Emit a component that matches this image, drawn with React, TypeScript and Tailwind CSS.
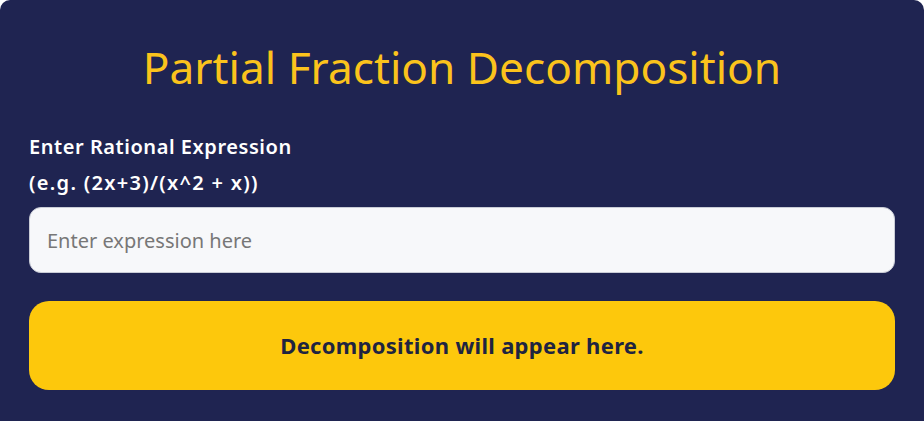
export default function App() {
  return (
    <div className="min-h-screen bg-white" style={{ fontFamily: '"Noto Sans", "Open Sans", sans-serif' }}>
      <div className="rounded-t-[10px] bg-[#1f2451] px-[29px] pt-[40px] pb-[40px]">
        <h1 className="text-center text-[44.2px] leading-[55px] font-normal text-[#fbc31c]">
          Partial Fraction Decomposition
        </h1>
        <div className="mt-[34px] text-[20px] leading-[36px] font-semibold text-white">
          <div className="tracking-[0.55px]">Enter Rational Expression</div>
          <div className="tracking-[1.3px]">(e.g. (2x+3)/(x^2 + x))</div>
        </div>
        <input
          type="text"
          placeholder="Enter expression here"
          className="mt-[6px] block h-[66px] w-full rounded-[12px] border border-[#c9ccd6] bg-[#f7f8fa] px-[17px] text-[20px] text-[#222] placeholder:text-[#777] outline-none"
        />
        <div className="mt-[28px] flex h-[89px] items-center justify-center rounded-[20px] bg-[#fdc80c] text-[22px] tracking-[0.3px] font-bold text-[#1f2440]">
          Decomposition will appear here.
        </div>
      </div>
    </div>
  );
}
